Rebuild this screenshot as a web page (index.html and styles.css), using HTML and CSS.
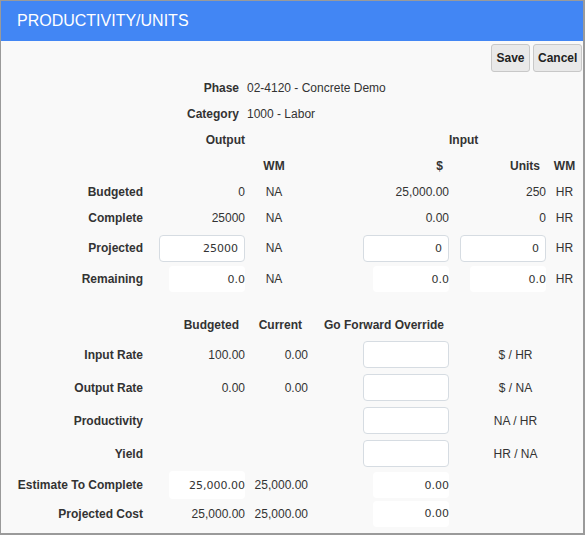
FILE: index.html
```html
<!DOCTYPE html>
<html lang="en">

<head>
    <meta charset="UTF-8">
    <title>Productivity/Units</title>
    <link rel="stylesheet" href="styles.css">
</head>

<body>
    <div class="dialog">
        <div class="title">PRODUCTIVITY/UNITS</div>
        <div class="toolbar">
            <button class="btn">Save</button>
            <button class="btn">Cancel</button>
        </div>

        <div class="info">
            <span class="lbl r">Phase</span><span>02-4120 - Concrete Demo</span>
            <span class="lbl r">Category</span><span>1000 - Labor</span>
        </div>

        <!-- output / input quantities -->
        <div class="units">
            <span></span><span class="lbl r">Output</span><span></span><span></span><span class="lbl hd-in">Input</span><span></span>
            <span></span><span></span><span class="lbl c">WM</span><span class="lbl r hd">$</span><span class="lbl r hd">Units</span><span class="lbl c">WM</span>

            <span class="lbl r">Budgeted</span><span class="r">0</span><span class="c">NA</span><span class="r">25,000.00</span><span class="r">250</span><span class="c">HR</span>
            <span class="lbl r">Complete</span><span class="r">25000</span><span class="c">NA</span><span class="r">0.00</span><span class="r">0</span><span class="c">HR</span>
            <span class="lbl r">Projected</span>
            <span class="r"><input class="field" value="25000"></span>
            <span class="c">NA</span>
            <span class="r"><input class="field" value="0"></span>
            <span class="r"><input class="field" value="0"></span>
            <span class="c">HR</span>
            <span class="lbl r">Remaining</span>
            <span class="r"><input class="field ro" value="0.0" readonly></span>
            <span class="c">NA</span>
            <span class="r"><input class="field ro" value="0.0" readonly></span>
            <span class="r"><input class="field ro" value="0.0" readonly></span>
            <span class="c">HR</span>
        </div>

        <!-- rates -->
        <div class="rates">
            <span></span><span class="lbl r hd">Budgeted</span><span class="lbl r hd">Current</span><span class="lbl r hd2">Go Forward Override</span><span></span>

            <span class="lbl r">Input Rate</span><span class="r">100.00</span><span class="r">0.00</span>
            <span class="r"><input class="field"></span><span class="c">$ / HR</span>
            <span class="lbl r">Output Rate</span><span class="r">0.00</span><span class="r">0.00</span>
            <span class="r"><input class="field"></span><span class="c">$ / NA</span>
            <span class="lbl r">Productivity</span><span></span><span></span>
            <span class="r"><input class="field"></span><span class="c">NA / HR</span>
            <span class="lbl r">Yield</span><span></span><span></span>
            <span class="r"><input class="field"></span><span class="c">HR / NA</span>
            <span class="lbl r">Estimate To Complete</span>
            <span class="r"><input class="field ro wide" value="25,000.00" readonly></span>
            <span class="r">25,000.00</span>
            <span class="r"><input class="field ro" value="0.00" readonly></span><span></span>
            <span class="lbl r">Projected Cost</span><span class="r">25,000.00</span><span class="r">25,000.00</span>
            <span class="r"><input class="field ro" value="0.00" readonly></span><span></span>
        </div>
    </div>
</body>

</html>
```

FILE: styles.css
```css
* {
    margin: 0;
    padding: 0;
    box-sizing: border-box;
}

body {
    font-family: "Liberation Sans", Arial, sans-serif;
    font-size: 12px;
    color: #333;
    background: #fff;
}

.dialog {
    width: 585px;
    height: 535px;
    border: 1px solid #9a9a9a;
    border-right-width: 2px;
    border-bottom-width: 2px;
    background: #f9f9f9;
    overflow: hidden;
}

.title {
    height: 40px;
    line-height: 40px;
    padding-left: 16px;
    background: #4286f4;
    color: #fff;
    font-size: 16px;
}

.toolbar {
    display: flex;
    justify-content: flex-end;
    gap: 3px;
    padding: 3px 1px 3px 0;
}

.btn {
    height: 28px;
    padding: 0 4px;
    font-family: "Liberation Sans", Arial, sans-serif;
    font-size: 12px;
    font-weight: bold;
    color: #222;
    background: #e9e9e9;
    border: 1px solid #c8c8c8;
    border-radius: 3px;
}

.btn:first-child {
    width: 39px;
}

.btn:last-child {
    width: 49px;
}

.lbl {
    font-weight: bold;
}

.r {
    text-align: right;
}

.c {
    text-align: center;
}

.info {
    display: grid;
    grid-template-columns: 238px auto;
    column-gap: 8px;
    grid-auto-rows: 26px;
    align-items: center;
}

.units {
    display: grid;
    grid-template-columns: 142px 102px 58px 146px 97px 37px;
    grid-template-rows: 26px 26px 26px 26px 34px 28px;
    align-items: center;
}

.rates {
    display: grid;
    grid-template-columns: 142px 102px 63px 141px 133px;
    grid-template-rows: 26px 33px 33px 33px 33px 30px 27px;
    align-items: center;
    margin-top: 19px;
}

.hd {
    padding-right: 6px;
}

.hd2 {
    padding-right: 5px;
}

.hd-in {
    text-align: left;
}

.field {
    width: 86px;
    height: 27px;
    padding: 0 6px;
    border: 1px solid #d6dce2;
    border-radius: 4px;
    background: #fff;
    text-align: right;
    font-family: "DejaVu Sans", sans-serif;
    font-size: 11px;
    color: #333;
    vertical-align: middle;
}

.field.ro {
    width: 76px;
    height: 26px;
    padding: 0;
    border: none;
}

.rates .field.ro.wide {
    height: 28px;
}
```
